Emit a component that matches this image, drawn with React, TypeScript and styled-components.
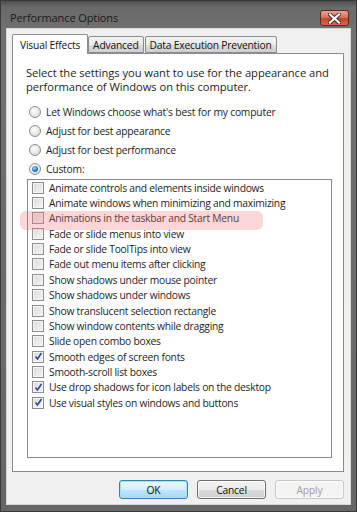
import React from "react";
import styled, { createGlobalStyle } from "styled-components";

const Global = createGlobalStyle`
  html, body { margin: 0; padding: 0; background: #5e5e5e; }
  body { font-family: "Open Sans", "Noto Sans", sans-serif; font-size: 11px; color: #1e1e1e; }
`;

const Window = styled.div`
  width: 357px;
  height: 512px;
  box-sizing: border-box;
  background: linear-gradient(180deg, #4e4e4e 0px, #6a6a6a 6px, #707070 30px, #666 100%);
  border: 1px solid #3a3a3a;
  display: flex;
  flex-direction: column;
  padding: 0 5px 6px 5px;
`;

const TitleBar = styled.div`
  height: 27px;
  display: flex;
  align-items: center;
  justify-content: space-between;
  padding: 0 2px 0 4px;
`;

const Title = styled.span`
  font-size: 11px;
  line-height: 15px;
  color: #1a1a1a;
  margin-top: 6px;
  letter-spacing: -0.1px;
`;

const CloseBtn = styled.div`
  width: 29px;
  height: 16px;
  margin-top: 7px;
  box-sizing: border-box;
  border: 1px solid #5c2a22;
  border-radius: 3px;
  background: linear-gradient(180deg, #e9a291 0%, #d67560 45%, #c4452c 55%, #d66a4c 100%);
  display: flex;
  align-items: center;
  justify-content: center;
`;

const Client = styled.div`
  flex: 1;
  background: #f0f0f0;
  border: 1px solid #d8d8d8;
  display: flex;
  flex-direction: column;
  padding: 5px 6px 0 5px;
`;

const TabStrip = styled.div`
  display: flex;
  align-items: flex-end;
  height: 19px;
  position: relative;
  z-index: 1;
`;

const Tab = styled.div<{ $active?: boolean }>`
  box-sizing: border-box;
  height: ${(p) => (p.$active ? "20px" : "17px")};
  padding: 0 ${(p) => (p.$active ? "7px" : "4px")};
  margin-bottom: ${(p) => (p.$active ? "-1px" : "0")};
  margin-right: ${(p) => (p.$active ? "0" : "1px")};
  border: 1px solid #898c95;
  border-bottom: ${(p) => (p.$active ? "none" : "1px solid #898c95")};
  border-radius: 2px 2px 0 0;
  background: ${(p) => (p.$active ? "#fff" : "linear-gradient(180deg, #f2f2f2 0%, #ebebeb 50%, #dddddd 51%, #cfcfcf 100%)")};
  display: flex;
  align-items: center;
  font-size: 10.3px;
  color: #111;
  white-space: nowrap;
  letter-spacing: -0.2px;
`;

const Panel = styled.div`
  height: 419px;
  box-sizing: border-box;
  background: #fff;
  border: 1px solid #898c95;
  padding: 12px 11px 13px 13px;
  display: flex;
  flex-direction: column;
`;

const Intro = styled.p`
  margin: 0 0 8px 0;
  font-size: 11.2px;
  line-height: 14px;
  letter-spacing: -0.05px;
`;

const RadioRow = styled.div`
  display: flex;
  align-items: center;
  gap: 5px;
  height: 19px;
  padding-left: 3px;
  font-size: 10.3px;
  letter-spacing: -0.2px;
`;

const RadioDot = styled.span<{ $on?: boolean }>`
  width: 12px;
  height: 12px;
  box-sizing: border-box;
  border-radius: 50%;
  border: 1px solid #8e8f8f;
  background: radial-gradient(circle at 40% 35%, #ffffff 0%, #e6e6e6 55%, #cfcfcf 100%);
  display: flex;
  align-items: center;
  justify-content: center;
  &::after {
    content: "";
    display: ${(p) => (p.$on ? "block" : "none")};
    width: 6px;
    height: 6px;
    border-radius: 50%;
    background: radial-gradient(circle at 40% 35%, #9fd0f5 0%, #2a7bc4 55%, #0d4a8a 100%);
  }
`;

const ListWrap = styled.div`
  position: relative;
  margin-top: 1px;
  flex: 1;
  margin-left: 1px;
`;

const ListBox = styled.div`
  height: 100%;
  box-sizing: border-box;
  border: 1px solid #828790;
  background: #fff;
  padding: 0 0 0 4px;
`;

const Highlight = styled.div`
  position: absolute;
  left: -7px;
  top: 32px;
  width: 243px;
  height: 19px;
  border-radius: 6px;
  background: rgba(240, 120, 120, 0.3);
  pointer-events: none;
`;

const CheckRow = styled.div`
  display: flex;
  align-items: center;
  gap: 5px;
  height: 15.36px;
  font-size: 10.3px;
  letter-spacing: -0.25px;
  white-space: nowrap;
`;

const Box = styled.span`
  width: 12px;
  height: 12px;
  box-sizing: border-box;
  border: 1px solid #8f8f8f;
  background: linear-gradient(135deg, #dcdcdc 0%, #f4f4f4 100%);
  box-shadow: inset 0 0 0 1px #f4f4f4;
  display: flex;
  align-items: center;
  justify-content: center;
  flex: none;
`;

const ButtonBar = styled.div`
  display: flex;
  justify-content: flex-end;
  gap: 9px;
  padding-top: 8px;
`;

const Button = styled.div<{ $default?: boolean; $disabled?: boolean }>`
  width: 69px;
  height: 19px;
  box-sizing: border-box;
  border-radius: 3px;
  border: 1px solid ${(p) => (p.$default ? "#3c7fb1" : p.$disabled ? "#c8c8c8" : "#707070")};
  background: ${(p) =>
    p.$disabled
      ? "#f4f4f4"
      : p.$default
      ? "linear-gradient(180deg, #eaf6fd 0%, #d9f0fc 50%, #bee6fd 51%, #a7d9f5 100%)"
      : "linear-gradient(180deg, #f2f2f2 0%, #ebebeb 50%, #dddddd 51%, #cfcfcf 100%)"};
  box-shadow: inset 0 0 0 1px ${(p) => (p.$default ? "#9ee3f7" : "rgba(255,255,255,0.7)")};
  color: ${(p) => (p.$disabled ? "#a0a0a0" : "#111")};
  display: flex;
  align-items: center;
  justify-content: center;
  font-size: 10.3px;
  letter-spacing: -0.2px;
`;

const Check = () => (
  <svg width="9" height="9" viewBox="0 0 9 9">
    <path d="M1.5 4.5 L3.5 7 L7.5 1" fill="none" stroke="#2a4a9a" strokeWidth="1.6" />
  </svg>
);

const items: [string, boolean][] = [
  ["Animate controls and elements inside windows", false],
  ["Animate windows when minimizing and maximizing", false],
  ["Animations in the taskbar and Start Menu", false],
  ["Fade or slide menus into view", false],
  ["Fade or slide ToolTips into view", false],
  ["Fade out menu items after clicking", false],
  ["Show shadows under mouse pointer", false],
  ["Show shadows under windows", false],
  ["Show translucent selection rectangle", false],
  ["Show window contents while dragging", false],
  ["Slide open combo boxes", false],
  ["Smooth edges of screen fonts", true],
  ["Smooth-scroll list boxes", false],
  ["Use drop shadows for icon labels on the desktop", true],
  ["Use visual styles on windows and buttons", true],
];

export default function App() {
  return (
    <>
      <Global />
      <Window>
        <TitleBar>
          <Title>Performance Options</Title>
          <CloseBtn>
            <svg width="13" height="11" viewBox="0 0 13 11">
              <path d="M2 1.5 L11 9.5 M11 1.5 L2 9.5" stroke="#4a2a25" strokeWidth="4" strokeLinecap="square" />
              <path d="M2 1.5 L11 9.5 M11 1.5 L2 9.5" stroke="#ffffff" strokeWidth="2.2" strokeLinecap="square" />
            </svg>
          </CloseBtn>
        </TitleBar>
        <Client>
          <TabStrip>
            <Tab $active>Visual Effects</Tab>
            <Tab>Advanced</Tab>
            <Tab>Data Execution Prevention</Tab>
          </TabStrip>
          <Panel>
            <Intro>
              Select the settings you want to use for the appearance and
              <br />
              performance of Windows on this computer.
            </Intro>
            <RadioRow><RadioDot />Let Windows choose what's best for my computer</RadioRow>
            <RadioRow><RadioDot />Adjust for best appearance</RadioRow>
            <RadioRow><RadioDot />Adjust for best performance</RadioRow>
            <RadioRow><RadioDot $on />Custom:</RadioRow>
            <ListWrap>
              <ListBox>
                {items.map(([label, on]) => (
                  <CheckRow key={label}>
                    <Box>{on && <Check />}</Box>
                    {label}
                  </CheckRow>
                ))}
              </ListBox>
              <Highlight />
            </ListWrap>
          </Panel>
          <ButtonBar>
            <Button $default>OK</Button>
            <Button>Cancel</Button>
            <Button $disabled>Apply</Button>
          </ButtonBar>
        </Client>
      </Window>
    </>
  );
}
